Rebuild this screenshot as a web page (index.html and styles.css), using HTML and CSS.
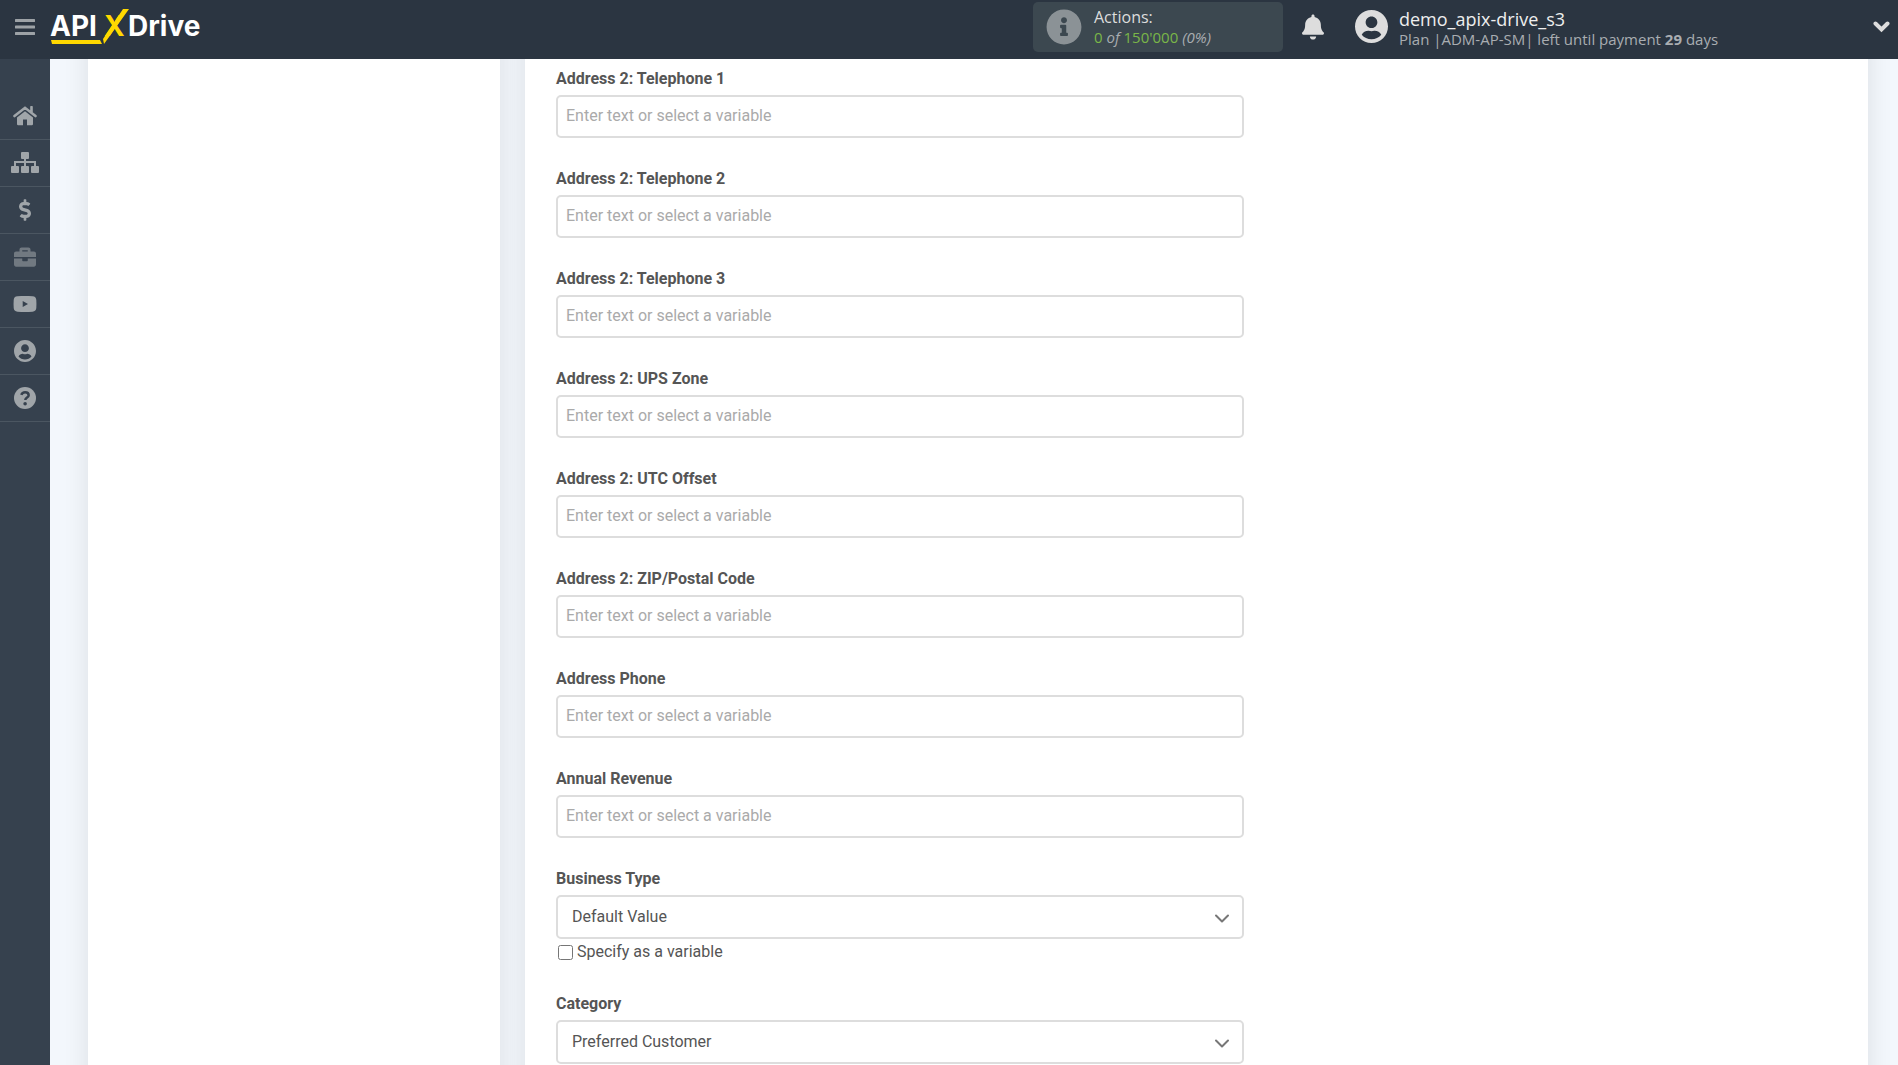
FILE: index.html
```html
<!DOCTYPE html>
<html lang="en">
<head>
    <meta charset="UTF-8">
    <meta name="viewport" content="width=device-width, initial-scale=1.0">
    <title>ApiX-Drive</title>
    <link rel="stylesheet" href="styles.css">
</head>
<body>
    <header class="header">
        <button type="button" class="icon-btn menu-btn" aria-label="Menu">
            <svg width="20" height="16" viewBox="0 0 20 16"><path d="M1 1.500h18M1 8h18M1 14.500h18" stroke="currentColor" stroke-width="3" stroke-linecap="round"/></svg>
        </button>
        <a href="#" class="logo" aria-label="ApiX-Drive">
            <svg width="154" height="40" viewBox="0 0 154 40">
                <g font-family="Inter, sans-serif" font-size="28" font-weight="700">
                    <text x="0" y="29" fill="#fff">API</text>
                    <text x="54" y="29" fill="#ffd800">X</text>
                    <text x="78" y="29" fill="#fff">Drive</text>
                </g>
                <path d="M73 2h6L54 37l-1-5zM1 33h49l2 4H2z" fill="#ffd800"/>
            </svg>
        </a>
        <div class="actions">
            <svg width="36" height="36" viewBox="0 0 512 512" fill="currentColor"><path d="M256 8C119 8 8 119 8 256s111 248 248 248 248-111 248-248S393 8 256 8zm0 110c23 0 42 19 42 42s-19 42-42 42-42-19-42-42 19-42 42-42zm56 254c0 7-5 12-12 12h-88c-7 0-12-5-12-12v-24c0-7 5-12 12-12h12v-64h-12c-7 0-12-5-12-12v-24c0-7 5-12 12-12h64c7 0 12 5 12 12v100h12c7 0 12 5 12 12v24z"/></svg>
            <div class="actions-text">
                <div class="actions-title">Actions:</div>
                <div><span class="green">0</span> <i>of</i> <span class="green">150'000</span> <i>(0%)</i></div>
            </div>
        </div>
        <button type="button" class="icon-btn bell" aria-label="Notifications">
            <svg width="22" height="26" viewBox="0 0 448 512" fill="currentColor"><path d="M224 512c35.320 0 63.970-28.650 63.970-64H160.030c0 35.350 28.650 64 63.970 64zm215.390-149.710c-19.320-20.760-55.470-51.990-55.470-154.290 0-77.700-54.480-139.900-127.940-155.160V32c0-17.670-14.320-32-31.980-32s-31.980 14.330-31.980 32v20.840C118.560 68.100 64.080 130.300 64.080 208c0 102.300-36.150 133.530-55.470 154.290-6 6.450-8.660 14.160-8.610 21.710.11 16.400 12.980 32 32.100 32h383.800c19.120 0 32-15.600 32.100-32 .05-7.550-2.610-15.270-8.610-21.710z"/></svg>
        </button>
        <div class="user">
            <svg width="33" height="33" viewBox="0 0 496 496" fill="currentColor"><path d="M248 0C111 0 0 111 0 248s111 248 248 248 248-111 248-248S385 0 248 0zm0 96c48.600 0 88 39.400 88 88s-39.400 88-88 88-88-39.400-88-88 39.400-88 88-88zm0 344c-58.700 0-111.300-26.600-146.500-68.200 18.800-35.400 55.600-59.800 98.500-59.800 2.400 0 4.800.4 7.100 1.100 13 4.200 26.600 6.900 40.900 6.900s28-2.700 40.900-6.900c2.300-.7 4.700-1.100 7.100-1.100 42.900 0 79.700 24.400 98.500 59.800C359.300 413.400 306.700 440 248 440z"/></svg>
            <div class="user-text">
                <div class="user-name">demo_apix-drive_s3</div>
                <div class="user-plan">Plan |ADM-AP-SM| left until payment <b>29</b> days</div>
            </div>
        </div>
        <button type="button" class="icon-btn" aria-label="Open account menu">
            <svg width="17" height="12" viewBox="0 0 17 12"><path d="M2.500 2.500l6 6 6-6" fill="none" stroke="currentColor" stroke-width="4" stroke-linecap="round"/></svg>
        </button>
    </header>

    <div class="layout">
        <nav class="sidebar">
            <a href="#" aria-label="Home"><svg width="24" height="20" viewBox="0 0 24 20"><path d="M1.500 10L12 1.800 22.500 10M18.500 1v5" fill="none" stroke="currentColor" stroke-width="2.600" stroke-linecap="round"/><path d="M12 5.200l8 6.300V18a1.200 1.200 0 0 1-1.200 1.200H14v-5.700h-4v5.700H5.200A1.200 1.200 0 0 1 4 18v-6.500z" fill="currentColor"/></svg></a>
            <a href="#" aria-label="Connections"><svg width="28" height="22" viewBox="0 0 28 22" fill="currentColor"><rect x="10" y="0" width="8" height="7" rx="1"/><rect x="0" y="14" width="8" height="7" rx="1"/><rect x="10" y="14" width="8" height="7" rx="1"/><rect x="20" y="14" width="8" height="7" rx="1"/><path d="M4 14v-4h20v4M14 6v8" fill="none" stroke="currentColor" stroke-width="2"/></svg></a>
            <a href="#" aria-label="Payments"><svg width="12" height="22" viewBox="0 0 288 512" fill="currentColor"><path d="M209.200 233.400l-108-31.600C88.700 198.200 80 186.500 80 173.500c0-16.300 13.200-29.500 29.500-29.500h66.300c12.200 0 24.200 3.700 34.200 10.500 6.100 4.100 14.300 3.100 19.500-2l34.800-34c7.100-6.900 6.100-18.400-1.800-24.500C238 74.800 207.400 64.100 176 64V16c0-8.800-7.200-16-16-16h-32c-8.800 0-16 7.200-16 16v48h-2.500C45.800 64-5.400 118.700.5 183.600c4.200 46.100 39.400 83.600 83.800 96.600l102.500 30c12.500 3.700 21.200 15.300 21.200 28.300 0 16.300-13.200 29.500-29.500 29.500h-66.300C100 368 88 364.300 78 357.500c-6.100-4.100-14.300-3.100-19.500 2l-34.800 34c-7.100 6.900-6.100 18.400 1.800 24.500 24.500 19.200 55.100 29.900 86.500 30v48c0 8.800 7.200 16 16 16h32c8.800 0 16-7.200 16-16v-48.200c46.600-.9 90.300-28.600 105.700-72.700 21.500-61.600-14.600-124.800-72.500-141.700z"/></svg></a>
            <a href="#" class="dim" aria-label="Business"><svg width="22" height="22" viewBox="0 0 512 512" fill="currentColor"><path d="M320 336c0 8.840-7.160 16-16 16h-96c-8.840 0-16-7.160-16-16v-48H0v144c0 25.600 22.400 48 48 48h416c25.600 0 48-22.400 48-48V288H320v48zm144-208h-80V80c0-25.600-22.400-48-48-48H176c-25.600 0-48 22.400-48 48v48H48c-25.600 0-48 22.400-48 48v80h512v-80c0-25.600-22.400-48-48-48zm-144 0H192V96h128v32z"/></svg></a>
            <a href="#" aria-label="Video"><svg width="24" height="16" viewBox="0 0 23 16"><path fill="currentColor" fill-rule="evenodd" d="M4 .3C9 0 14 0 19 .3c2.500.2 3.600 1.500 3.800 3.700.2 2.700.2 5.300 0 8-.2 2.200-1.300 3.500-3.800 3.700-5 .3-10 .3-15 0C1.500 15.500.4 14.200.2 12 0 9.300 0 6.700.2 4 .4 1.800 1.500.5 4 .3zM9.200 5v6l5.300-3z"/></svg></a>
            <a href="#" aria-label="Account"><svg width="22" height="22" viewBox="0 0 496 496" fill="currentColor"><path d="M248 0C111 0 0 111 0 248s111 248 248 248 248-111 248-248S385 0 248 0zm0 96c48.600 0 88 39.400 88 88s-39.400 88-88 88-88-39.400-88-88 39.400-88 88-88zm0 344c-58.700 0-111.300-26.600-146.500-68.200 18.800-35.400 55.600-59.800 98.500-59.800 2.400 0 4.800.4 7.100 1.100 13 4.200 26.600 6.900 40.900 6.900s28-2.700 40.900-6.900c2.300-.7 4.700-1.100 7.100-1.100 42.900 0 79.700 24.400 98.500 59.800C359.300 413.400 306.700 440 248 440z"/></svg></a>
            <a href="#" aria-label="Help"><svg width="22" height="22" viewBox="0 0 21 21"><circle cx="10.500" cy="10.500" r="10.500" fill="currentColor"/><path d="M7 7.600c.6-1.900 2-2.700 3.600-2.700 2 0 3.400 1.200 3.400 2.900 0 2.300-3.200 2.300-3.200 4.700" fill="none" stroke="#36414e" stroke-width="2.400"/><circle cx="10.600" cy="15.900" r="1.700" fill="#36414e"/></svg></a>
        </nav>

        <main class="content">
            <section class="panel"></section>
            <section class="panel panel-form">
                <form class="form">
                    <div class="field">
                        <label for="telephone1">Address 2: Telephone 1</label>
                        <input type="text" id="telephone1" placeholder="Enter text or select a variable">
                    </div>
                    <div class="field">
                        <label for="telephone2">Address 2: Telephone 2</label>
                        <input type="text" id="telephone2" placeholder="Enter text or select a variable">
                    </div>
                    <div class="field">
                        <label for="telephone3">Address 2: Telephone 3</label>
                        <input type="text" id="telephone3" placeholder="Enter text or select a variable">
                    </div>
                    <div class="field">
                        <label for="upsZone">Address 2: UPS Zone</label>
                        <input type="text" id="upsZone" placeholder="Enter text or select a variable">
                    </div>
                    <div class="field">
                        <label for="utcOffset">Address 2: UTC Offset</label>
                        <input type="text" id="utcOffset" placeholder="Enter text or select a variable">
                    </div>
                    <div class="field">
                        <label for="zip">Address 2: ZIP/Postal Code</label>
                        <input type="text" id="zip" placeholder="Enter text or select a variable">
                    </div>
                    <div class="field">
                        <label for="phone">Address Phone</label>
                        <input type="text" id="phone" placeholder="Enter text or select a variable">
                    </div>
                    <div class="field">
                        <label for="revenue">Annual Revenue</label>
                        <input type="text" id="revenue" placeholder="Enter text or select a variable">
                    </div>
                    <div class="field">
                        <label for="businessType">Business Type</label>
                        <div class="select">
                            <select id="businessType">
                                <option>Default Value</option>
                            </select>
                            <svg width="16" height="10" viewBox="0 0 16 10"><path d="M2 1.500l6 6 6-6" fill="none" stroke="currentColor" stroke-width="2" stroke-linecap="round" stroke-linejoin="round"/></svg>
                        </div>
                        <div class="check">
                            <input type="checkbox" id="businessVariable">
                            <label for="businessVariable">Specify as a variable</label>
                        </div>
                    </div>
                    <div class="field">
                        <label for="category">Category</label>
                        <div class="select">
                            <select id="category">
                                <option>Preferred Customer</option>
                            </select>
                            <svg width="16" height="10" viewBox="0 0 16 10"><path d="M2 1.500l6 6 6-6" fill="none" stroke="currentColor" stroke-width="2" stroke-linecap="round" stroke-linejoin="round"/></svg>
                        </div>
                    </div>
                </form>
            </section>
        </main>
    </div>
</body>
</html>
```
FILE: styles.css
```css
* {
    box-sizing: border-box;
}
body {
    margin: 0;
    min-height: 100vh;
    display: flex;
    flex-direction: column;
    font-family: Roboto, sans-serif;
    font-size: 16px;
    color: #555;
    background: #f3f7fc;
}
svg {
    display: block;
}

/* top bar */
.header {
    position: sticky;
    top: 0;
    z-index: 2;
    height: 59px;
    padding: 0 8px 6px 15px;
    display: flex;
    align-items: center;
    background: #2b3541;
    color: #ddd;
    font-family: "Open Sans", sans-serif;
}
.icon-btn {
    padding: 0;
    border: none;
    background: none;
    color: inherit;
    cursor: pointer;
}
.menu-btn {
    color: #9da2a6;
}
.logo {
    margin-left: 15px;
}
.actions {
    display: flex;
    align-items: center;
    gap: 12px;
    width: 250px;
    height: 50px;
    margin-left: auto;
    padding: 0 13px;
    border-radius: 5px;
    background: #3c4850;
    color: #8b9296;
}
.actions-text {
    font-size: 15px;
    line-height: 20px;
    color: #a9adb1;
}
.actions-title {
    font-size: 16px;
    color: #ddd;
}
.green {
    color: #7ab648;
}
.bell {
    margin: 0 31px 0 19px;
}
.user {
    display: flex;
    align-items: center;
    gap: 11px;
    flex: 0 1 518px;
}
.user-text {
    padding-top: 4px;
    line-height: 20px;
}
.user-name {
    font-size: 18px;
    color: #eee;
}
.user-plan {
    font-size: 15px;
    color: #a9adb1;
}

/* left menu */
.layout {
    flex: 1;
    display: flex;
}
.sidebar {
    flex: 0 0 50px;
    padding-top: 34px;
    background: #36414e;
}
.sidebar a {
    display: flex;
    align-items: center;
    justify-content: center;
    height: 47px;
    border-bottom: 1px solid #4b5661;
    color: #a0a5a9;
}
.sidebar .dim {
    color: #717981;
}

/* content */
.content {
    flex: 1;
    display: grid;
    grid-template-columns: 412px 1fr;
    gap: 25px;
    padding: 0 30px 0 38px;
    overflow: hidden;
}
/* panels run past both edges so only their side shadows show */
.panel {
    margin: -30px 0;
    background: #fff;
    box-shadow: 0 0 24px rgba(0, 0, 0, 0.1);
}
.panel-form {
    padding: 38px 31px 30px;
}
.form {
    max-width: 688px;
}
.field {
    margin-bottom: 29px;
}
.field:last-child {
    margin-bottom: 0;
}
.field > label {
    display: block;
    margin-bottom: 4px;
    line-height: 24px;
    font-weight: 700;
}
.field input[type="text"],
.field select {
    display: block;
    width: 100%;
    height: 43px;
    padding: 0 8px 2px;
    border: 2px solid #ddd;
    border-radius: 5px;
    background: #fff;
    font-family: inherit;
    font-size: 16px;
    color: #555;
    outline: none;
}
.field input::placeholder {
    color: #aaa;
}
.field input:focus,
.field select:focus {
    border-color: #aaa;
}
.select {
    position: relative;
}
.field select {
    height: 44px;
    padding: 0 40px 2px 14px;
    appearance: none;
}
.select svg {
    position: absolute;
    right: 14px;
    top: 19px;
    color: #777;
    pointer-events: none;
}
.check {
    display: flex;
    align-items: center;
    gap: 4px;
    margin-top: 2px;
    padding-left: 2px;
    line-height: 22px;
}
.check input {
    width: 15px;
    height: 15px;
    margin: 0;
}
```
